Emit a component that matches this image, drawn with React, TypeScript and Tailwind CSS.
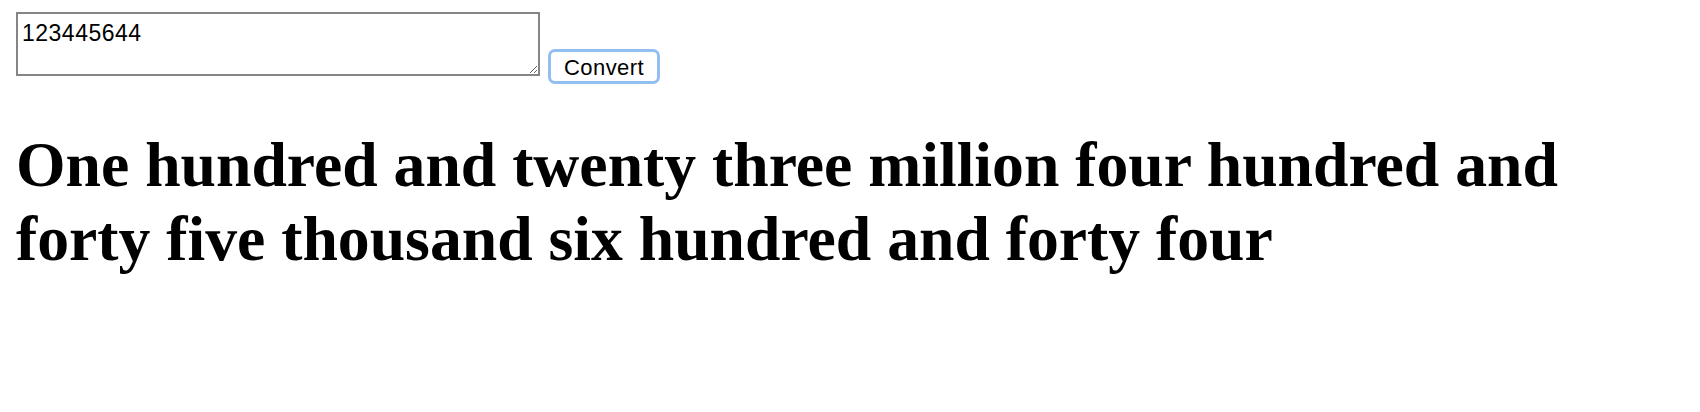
import { useState } from 'react';

const toWords = (input: string): string => {
    const ones = ['', 'one', 'two', 'three', 'four', 'five', 'six', 'seven', 'eight', 'nine', 'ten',
        'eleven', 'twelve', 'thirteen', 'fourteen', 'fifteen', 'sixteen', 'seventeen', 'eighteen', 'nineteen'];
    const tens = ['', '', 'twenty', 'thirty', 'forty', 'fifty', 'sixty', 'seventy', 'eighty', 'ninety'];
    const scales = ['', 'thousand', 'million', 'billion'];

    const chunk = (n: number): string => {
        const parts: string[] = [];
        if (n >= 100) {
            parts.push(ones[Math.floor(n / 100)] + ' hundred');
            n = n % 100;
            if (n) parts.push('and');
        }
        if (n >= 20) {
            parts.push(tens[Math.floor(n / 10)] + (n % 10 ? ' ' + ones[n % 10] : ''));
        } else if (n) {
            parts.push(ones[n]);
        }
        return parts.join(' ');
    };

    let n = parseInt(input, 10);
    if (isNaN(n)) return '';
    if (n === 0) return 'Zero';
    const out: string[] = [];
    let i = 0;
    while (n > 0) {
        const c = n % 1000;
        if (c) out.unshift(chunk(c) + (scales[i] ? ' ' + scales[i] : ''));
        n = Math.floor(n / 1000);
        i++;
    }
    const s = out.join(' ');
    return s.charAt(0).toUpperCase() + s.slice(1);
};

const App = () => {
    const [value, setValue] = useState('123445644');
    const [result, setResult] = useState(toWords('123445644'));

    return (
        <div className="min-h-[412px] bg-white px-[16px] pt-[12px] text-black">
            <div className="flex items-start gap-[8px]">
                <textarea
                    value={value}
                    onChange={(e) => setValue(e.target.value)}
                    className="w-[524px] h-[64px] border-2 border-[#858585] bg-white px-[4px] pt-[6px] font-['Liberation_Sans',Arial,sans-serif] text-[23px] leading-[26px] tracking-[0.5px] text-black outline-none"
                />
                <button
                    onClick={() => setResult(toWords(value))}
                    className="mt-[37px] w-[112px] h-[35px] rounded-[7px] border-[3px] border-[#92bef2] bg-white pt-[2px] text-center font-['Liberation_Sans',Arial,sans-serif] text-[22px] leading-[25px] tracking-[0.4px] text-black"
                >
                    Convert
                </button>
            </div>
            <h1 className="mt-[44px] pr-[16px] font-['Liberation_Serif','Times_New_Roman',serif] text-[63.7px] leading-[73.6px] font-bold">
                {result}
            </h1>
        </div>
    );
};

export default App;
